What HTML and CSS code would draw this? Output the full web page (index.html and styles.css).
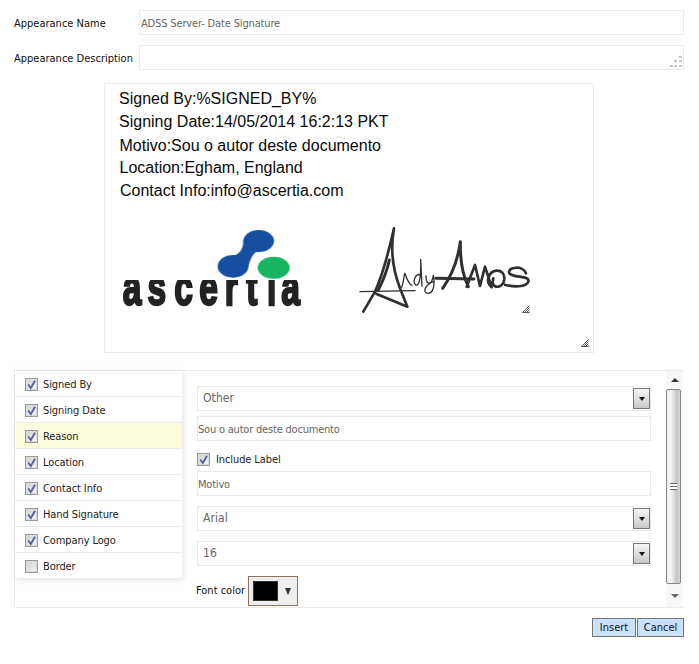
FILE: index.html
```html
<!DOCTYPE html>
<html lang="en">
<head>
<meta charset="utf-8">
<title>Appearance</title>
<link rel="stylesheet" href="styles.css">
</head>
<body>
<svg class="defs" width="0" height="0" aria-hidden="true">
  <defs>
    <symbol id="check" viewBox="0 0 13 13">
      <path d="M3.2 6.5 L5.8 10 L10 2.8" fill="none" stroke="#4f64a0" stroke-width="1.8"/>
    </symbol>
    <symbol id="grip" viewBox="0 0 8 8">
      <path d="M0.5 7.5 L7.5 0.5 M2.5 7.5 L7.5 2.5 M4.5 7.5 L7.5 4.5 M6.5 7.5 L7.5 6.5 M0.5 7.5 H7.5" fill="none" stroke="#444" stroke-width="0.9"/>
    </symbol>
  </defs>
</svg>
<main class="page">
  <div class="field-row">
    <label class="field-label">Appearance Name</label>
    <div class="field-box">ADSS Server- Date Signature</div>
  </div>
  <div class="field-row">
    <label class="field-label">Appearance Description</label>
    <div class="field-box textarea">
      <svg class="dots" width="14" height="14" viewBox="0 0 14 14"><path d="M10 1h3v2h-3zM10 5h3v2h-3zM5 5h3v2H5zM10 10h3v2h-3zM5 10h3v2H5zM1 10h3v2H1z" fill="#c8c8c8"/></svg>
    </div>
  </div>

  <section class="preview">
    <div class="sig-line l1">Signed By:%SIGNED_BY%</div>
    <div class="sig-line l2">Signing Date:14/05/2014 16:2:13 PKT</div>
    <div class="sig-line l3">Motivo:Sou o autor deste documento</div>
    <div class="sig-line l4">Location:Egham, England</div>
    <div class="sig-line l5">Contact Info:info@ascertia.com</div>
    <svg class="logo" viewBox="60 50 560 290" width="186.7" height="96.7">
      <defs>
        <filter id="soft" x="-5%" y="-5%" width="110%" height="110%"><feGaussianBlur stdDeviation="2.2"/></filter>
        <clipPath id="letters"><rect x="60" y="212" width="560" height="80"/></clipPath>
      </defs>
      <g filter="url(#soft)">
        <ellipse cx="476" cy="95" rx="46" ry="33" fill="#134f9f"/>
        <ellipse cx="399" cy="171" rx="46" ry="34" fill="#134f9f"/>
        <path d="M430 92 L478 124 C460 128 452 145 444 175 L395 140 C415 136 430 125 430 92Z" fill="#134f9f"/>
        <ellipse cx="521" cy="175" rx="48" ry="33" fill="#14b464"/>
        <g clip-path="url(#letters)">
          <text class="logo-text" transform="scale(0.68 1)" y="288" x="100 210 328 438 550 645 737 800">ascertia</text>
        </g>
      </g>
    </svg>
    <svg class="signature" viewBox="0 0 750 450" width="250" height="150">
      <g fill="none" stroke="#303030" stroke-linecap="round" stroke-linejoin="round">
        <path d="M40 305 L75 245 C100 190 115 130 132 55 C122 110 125 170 150 235 L172 290 L80 252" stroke-width="8"/>
        <path d="M118 150 C112 180 100 210 85 240" stroke-width="9"/>
        <path d="M30 245 L195 242" stroke-width="4"/>
        <path d="M155 232 C163 212 160 198 165 190 C170 205 175 222 186 226 M212 194 C195 190 188 215 196 224 C205 230 214 215 212 148 L216 228 M228 198 C228 225 245 228 250 196 C256 225 250 250 233 250 C218 248 222 225 252 214" stroke-width="4"/>
        <path d="M278 235 C310 190 325 140 331 95 C330 150 340 200 355 230" stroke-width="9"/>
        <path d="M258 205 L372 207" stroke-width="9"/>
        <path d="M350 230 L375 165 L390 228 L405 170 L425 232 C405 215 415 185 440 182 C470 180 470 225 445 230 C430 232 425 220 430 205" stroke-width="8"/>
        <path d="M528 190 C520 165 470 170 478 190 C490 205 540 195 535 215 C528 232 490 232 465 224" stroke-width="8"/>
      </g>
    </svg>
    <svg class="grip grip-inner" width="8" height="8"><use href="#grip"/></svg>
    <svg class="grip grip-outer" width="8" height="8"><use href="#grip"/></svg>
  </section>

  <section class="panel">
    <ul class="items">
      <li class="item"><span class="cb"><svg width="13" height="13"><use href="#check"/></svg></span>Signed By</li>
      <li class="item"><span class="cb"><svg width="13" height="13"><use href="#check"/></svg></span>Signing Date</li>
      <li class="item active"><span class="cb"><svg width="13" height="13"><use href="#check"/></svg></span>Reason</li>
      <li class="item"><span class="cb"><svg width="13" height="13"><use href="#check"/></svg></span>Location</li>
      <li class="item"><span class="cb"><svg width="13" height="13"><use href="#check"/></svg></span>Contact Info</li>
      <li class="item"><span class="cb"><svg width="13" height="13"><use href="#check"/></svg></span>Hand Signature</li>
      <li class="item"><span class="cb"><svg width="13" height="13"><use href="#check"/></svg></span>Company Logo</li>
      <li class="item"><span class="cb"></span>Border</li>
    </ul>
    <div class="editor">
      <div class="select">Other<span class="select-btn"><i class="tri"></i></span></div>
      <div class="input gap-5">Sou o autor deste documento</div>
      <div class="check-row"><span class="cb"><svg width="13" height="13"><use href="#check"/></svg></span>Include Label</div>
      <div class="input">Motivo</div>
      <div class="select gap-10">Arial<span class="select-btn"><i class="tri"></i></span></div>
      <div class="select gap-10">16<span class="select-btn"><i class="tri"></i></span></div>
      <div class="color-row">
        <span class="color-label">Font color</span>
        <span class="color-btn"><span class="swatch"></span><i class="tri-dark"></i></span>
      </div>
    </div>
    <div class="scrollbar">
      <div class="arrow up"><i class="tri-up"></i></div>
      <div class="thumb"><span class="thumb-grip"></span></div>
      <div class="arrow down"><i class="tri-down"></i></div>
    </div>
  </section>

  <div class="actions">
    <button class="btn">Insert</button>
    <button class="btn">Cancel</button>
  </div>
</main>
</body>
</html>
```
FILE: styles.css
```css
* { box-sizing: border-box; }
html, body { margin: 0; padding: 0; background: #fff; }
body { width: 699px; height: 664px; overflow: hidden; font-family: "DejaVu Sans Condensed", "DejaVu Sans", sans-serif; font-size: 11px; color: #111; }
.defs { position: absolute; }
.page { padding: 10px 15px 0 14px; }

.field-row { display: flex; align-items: center; height: 25px; margin-bottom: 10px; }
.field-label { width: 125px; flex: none; white-space: nowrap; padding-top: 2px; }
.field-box { flex: 1; height: 25px; border: 1px solid #ebebeb; padding: 1px 0 0 1px; line-height: 23px; color: #666; position: relative; letter-spacing: -.15px; }
.dots { position: absolute; right: 0; bottom: 0; }

.preview { position: relative; width: 490px; height: 270px; margin: 13px 0 0 90px; border: 1px solid #ebebeb; font-family: "Liberation Sans", Arial, sans-serif; }
.sig-line { position: absolute; font-size: 16px; line-height: 18px; color: #0a0a0a; white-space: nowrap; }
.l1 { left: 14px; top: 6px; }
.l2 { left: 14px; top: 29px; }
.l3 { left: 14.5px; top: 53px; }
.l4 { left: 14.5px; top: 75px; }
.l5 { left: 15px; top: 98px; }
.logo { position: absolute; left: 15px; top: 142px; }
.logo-text { font-family: "Liberation Sans", sans-serif; font-weight: 700; font-size: 148px; fill: #222; stroke: #222; stroke-width: 7px; }
.signature { position: absolute; left: 245px; top: 126px; }
.grip { position: absolute; }
.grip-inner { left: 417px; top: 221px; }
.grip-outer { left: 476px; top: 255px; }

.panel { display: flex; height: 238px; margin-top: 17px; border: 1px solid #ebebeb; border-right: 0; }
.items { list-style: none; margin: 0; padding: 0; width: 167px; height: 208px; flex: none; background: #fff; box-shadow: 1px 1px 6px rgba(0, 0, 0, .12); position: relative; }
.item { display: flex; align-items: center; gap: 5px; height: 26px; padding: 1px 0 0 10px; border-bottom: 1px solid #ebebeb; color: #222; letter-spacing: -.1px; }
.item.active { background: #fefcdf; }
.cb { display: block; width: 13px; height: 13px; flex: none; border: 1px solid #999; background: linear-gradient(135deg, #cfcfcf, #f6f6f6); box-shadow: inset 0 0 0 1px #dcdcdc; position: relative; }
.cb svg { position: absolute; left: -1px; top: -1px; display: block; }

.editor { width: 454px; margin-left: 15px; flex: none; padding-top: 15px; }
.select { position: relative; height: 25px; border: 1px solid #ebebeb; padding-left: 5px; font-size: 12px; line-height: 23px; color: #666; letter-spacing: .1px; }
.input { height: 25px; border: 1px solid #ebebeb; padding: 1px 0 0; line-height: 23px; color: #666; letter-spacing: -.2px; }
.gap-5 { margin-top: 5px; }
.gap-10 { margin-top: 10px; }
.select-btn { position: absolute; right: 0; top: 1px; width: 17px; height: 21px; border: 1px solid #777; background: linear-gradient(#f6f6f6, #c8c8c8); display: flex; align-items: center; justify-content: center; }
.tri { width: 0; height: 0; border-left: 3.5px solid transparent; border-right: 3.5px solid transparent; border-top: 4px solid #111; }
.check-row { display: flex; align-items: center; gap: 6px; height: 30px; padding-top: 7px; color: #222; letter-spacing: -.1px; }
.color-row { display: flex; align-items: center; gap: 3px; height: 30px; margin-top: 10px; margin-left: -1px; }
.color-label { padding-bottom: 2px; }
.color-btn { display: flex; align-items: center; width: 50px; height: 30px; border: 1px solid #8e745a; background: #eee; padding-left: 4px; gap: 6px; }
.swatch { width: 25px; height: 20px; background: #000; border: 1px solid #333; }
.tri-dark { width: 0; height: 0; margin-left: 1px; border-left: 3.5px solid transparent; border-right: 3.5px solid transparent; border-top: 7px solid #333; }

.scrollbar { width: 17px; margin-left: 15px; flex: none; display: flex; flex-direction: column; background: #f8f8f8; }
.arrow { display: flex; align-items: center; justify-content: center; background: #f7f7f7; }
.up { height: 18px; }
.down { height: 23px; }
.tri-up { width: 0; height: 0; border-left: 4px solid transparent; border-right: 4px solid transparent; border-bottom: 4px solid #333; }
.tri-down { width: 0; height: 0; border-left: 4px solid transparent; border-right: 4px solid transparent; border-top: 4px solid #666; }
.thumb { flex: 1; width: 15px; border: 1px solid #888; border-radius: 2px; background: linear-gradient(90deg, #ececec, #fafafa 25%, #c4c4c4 75%, #d8d8d8); display: flex; align-items: center; justify-content: center; }
.thumb-grip { width: 7px; height: 7px; border-top: 1px solid #666; border-bottom: 1px solid #666; background: linear-gradient(#fff 0 2px, #666 2px 3px, #fff 3px); }

.actions { display: flex; justify-content: flex-end; margin-top: 10px; padding-right: 0; }
.btn { height: 19px; padding: 0; border: 1px solid #777; background: #c9e0ff; font: 11px "DejaVu Sans Condensed", sans-serif; color: #111; }
.btn:first-child { width: 44px; margin-right: 1px; }
.btn:last-child { width: 47px; }
```
